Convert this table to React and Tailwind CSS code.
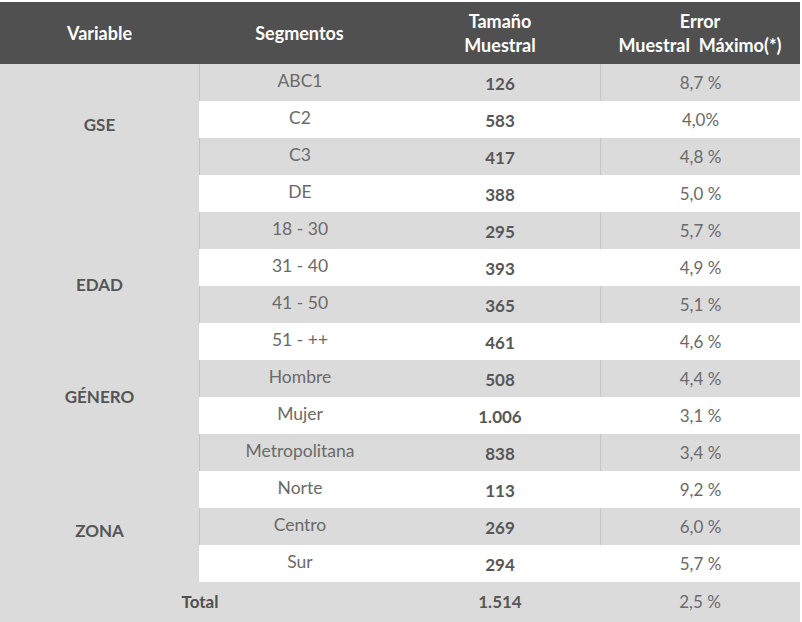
import React from 'react';

const groups = [
  {
    label: 'GSE',
    pad: 'pt-[51px]',
    rows: [
      ['ABC1', '126', '8,7 %'],
      ['C2', '583', '4,0%'],
      ['C3', '417', '4,8 %'],
      ['DE', '388', '5,0 %'],
    ],
  },
  {
    label: 'EDAD',
    pad: 'pt-[63px]',
    rows: [
      ['18 - 30', '295', '5,7 %'],
      ['31 - 40', '393', '4,9 %'],
      ['41 - 50', '365', '5,1 %'],
      ['51 - ++', '461', '4,6 %'],
    ],
  },
  {
    label: 'GÉNERO',
    pad: 'pt-[27px]',
    rows: [
      ['Hombre', '508', '4,4 %'],
      ['Mujer', '1.006', '3,1 %'],
    ],
  },
  {
    label: 'ZONA',
    pad: 'pt-[87px]',
    rows: [
      ['Metropolitana', '838', '3,4 %'],
      ['Norte', '113', '9,2 %'],
      ['Centro', '269', '6,0 %'],
      ['Sur', '294', '5,7 %'],
    ],
  },
];

function Row({ seg, n, err, gray }) {
  const bg = gray ? 'bg-[#dbdbdb]' : 'bg-white';
  return (
    <div className={`flex h-[37px] ${bg}`}>
      <div className={`w-[201px] text-center pt-[6px] leading-[22px] text-[17.5px] text-[#6a6a6a] ${gray ? 'border-l border-[#c4c4c4]' : 'pl-px'}`}>
        {seg}
      </div>
      <div className="w-[200px] text-center pt-[9px] leading-[22px] text-[17px] font-bold text-[#575757]">{n}</div>
      <div className={`w-[200px] text-center pt-[8px] leading-[22px] text-[17px] text-[#6a6a6a] ${gray ? 'border-l border-[#c4c4c4]' : 'pl-px'}`}>
        {err}
      </div>
    </div>
  );
}

export default function App() {
  let idx = 0;
  return (
    <div className="w-[802px] h-[622px] bg-white pt-[2px] text-[16px]" style={{ fontFamily: 'Lato, "Open Sans", sans-serif' }}>
      <div className="w-[800px]">
        {/* cabecera */}
        <div className="flex h-[62px] bg-[#505050] text-white font-bold text-[18px] leading-[24px]">
          <div className="w-[199px] flex items-center justify-center">Variable</div>
          <div className="w-[201px] flex items-center justify-center">Segmentos</div>
          <div className="w-[200px] flex flex-col items-center justify-center text-center">
            <span>Tamaño</span>
            <span>Muestral</span>
          </div>
          <div className="w-[200px] flex flex-col items-center justify-center text-center">
            <span>Error</span>
            <span className="whitespace-pre">Muestral  Máximo(*)</span>
          </div>
        </div>

        {groups.map((g) => (
          <div key={g.label} className="flex">
            <div className={`w-[199px] bg-[#dbdbdb] text-center font-bold text-[17px] text-[#555] leading-[20px] ${g.pad}`}>
              {g.label}
            </div>
            <div className="flex-1">
              {g.rows.map(([seg, n, err]) => {
                const gray = idx % 2 === 0;
                idx++;
                return <Row key={seg} seg={seg} n={n} err={err} gray={gray} />;
              })}
            </div>
          </div>
        ))}

        {/* total */}
        <div className="flex h-[40px] bg-[#dbdbdb] items-center leading-[22px]">
          <div className="w-[400px] text-center font-bold text-[17px] text-[#505050]">Total</div>
          <div className="w-[200px] text-center font-bold text-[17px] text-[#575757]">1.514</div>
          <div className="w-[200px] text-center text-[17px] text-[#6a6a6a]">2,5 %</div>
        </div>
      </div>
    </div>
  );
}
